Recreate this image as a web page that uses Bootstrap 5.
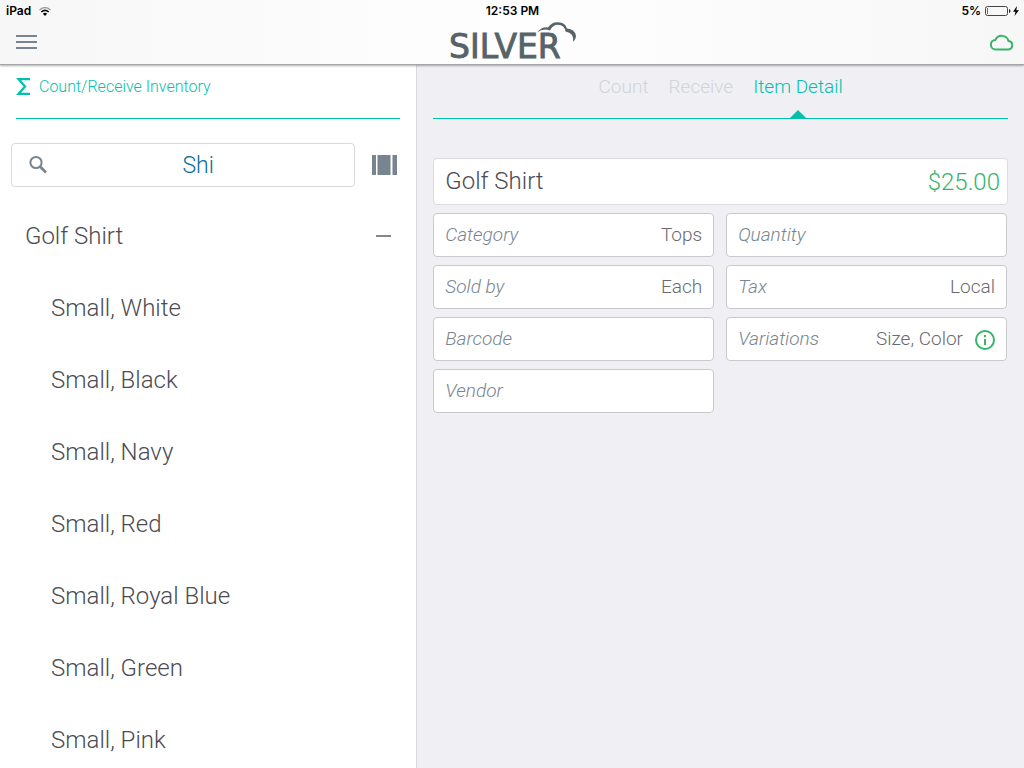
<!DOCTYPE html>
<html lang="en">
<head>
<meta charset="utf-8">
<meta name="viewport" content="width=device-width, initial-scale=1">
<title>Silver – Item Detail</title>
<link href="https://cdn.jsdelivr.net/npm/bootstrap@5.3.0/dist/css/bootstrap.min.css" rel="stylesheet">
<style>
  :root { --teal: #03bfad; --slate: #788590; --ink: #4b4b52; --green: #34b568; }
  body { font-family: Roboto, "Liberation Sans", sans-serif; font-weight: 300; color: var(--ink); background: #efeff4; }
  svg { display: block; flex: none; }
  .three-part { display: grid; grid-template-columns: 1fr auto 1fr; }
  .app-header { flex: none; background: linear-gradient(90deg, #f7f7f7, #fefefe 50%, #f7f7f7); border-bottom: 1px solid #a6a6aa; box-shadow: 0 1px 2px #00000050; z-index: 2; }
  .status-bar { height: 22px; font: 600 12px/22px Inter, sans-serif; color: #000; padding: 0 5px 0 6px; }
  .brand-bar { height: 42px; padding: 0 10px 2px; }
  .menu-button { margin-left: 6px; }
  .brand-logo { overflow: visible; }
  .brand-logo text { font: 33px "DejaVu Sans", sans-serif; }
  .side-pane { flex: 0 0 40.75%; border-right: 1px solid #d9d9de; }
  .title-bar { flex: none; height: 54px; margin: 0 16px; border-bottom: 1px solid var(--teal); color: var(--teal); }
  .side-title { font-size: 16px; font-weight: 300; line-height: 44px; }
  .search-field { height: 44px; border: 1px solid #dadadd; border-radius: 4px; padding: 0 16px; }
  .search-field input { font-size: 23px; font-weight: 300; color: #0a6ca0; padding: 2px 0 0 10px; }
  .search-field input:focus { color: #0a6ca0; }
  .search-row { padding: 24px 18px 0 11px; gap: 16px; }
  .item-list { padding: 13px 24px 0 25px; scrollbar-width: none; }
  .item-row { height: 72px; font-size: 24px; font-weight: 300; color: var(--ink); }
  .item-variant { padding-left: 26px; }
  .detail-tabs { gap: 20px; }
  .detail-tabs a { font-size: 19px; line-height: 44px; height: 53px; color: #d0d5d9; text-decoration: none; }
  .detail-tabs a.active { color: var(--teal); position: relative; }
  .detail-tabs a.active::after { content: ""; position: absolute; bottom: 0; left: 50%; margin-left: -8px; border: 8px solid transparent; border-top: 0; border-bottom-color: var(--teal); }
  .detail-pane { min-width: 0; }
  .detail-body { padding: 39px 16px 16px; }
  .field-box { min-width: 0; background: #fff; border: 1px solid #c9c9cd; border-radius: 4px; height: 44px; padding: 1px 11px 0; font-size: 19px; }
  .field-box label { font-style: italic; color: var(--slate); }
  .field-box input { width: 0; flex: 1; border: 0; outline: 0; padding: 0; background: none; text-align: right; color: #69696e; font-weight: 300; }
  .item-head { background: #fff; border: 1px solid #dcdce0; border-radius: 4px; height: 47px; padding: 0 7px 0 11px; font-size: 24px; margin-bottom: 8px; }
  .item-head h1 { font-size: 24px; font-weight: 300; }
  .price { color: var(--green); }
  .field-grid { display: grid; grid-template-columns: 1fr 1fr; gap: 8px 12px; margin-right: 1px; }
</style>
</head>
<body>
<div class="d-flex flex-column vh-100 overflow-hidden">
  <header class="app-header position-relative">
    <div class="status-bar three-part">
      <div class="d-flex align-items-center gap-2"><span>iPad</span>
        <svg width="12" height="9" viewBox="0 0 12 9" fill="none"><path d="M.5 3Q6-1.800 11.500 3" stroke="#999" stroke-width="1.300"/><path d="M2.300 5Q6 1.900 9.700 5" stroke="#000" stroke-width="1.600"/><path d="M6 9 3.900 6.700Q6 5 8.100 6.700Z" fill="#000"/></svg>
      </div>
      <span>12:53 PM</span>
      <div class="d-flex align-items-center justify-content-end gap-1"><span>5%</span>
        <svg width="34" height="10" viewBox="0 0 34 10"><rect x=".5" y=".5" width="22" height="9" rx="2" fill="none" stroke="#444"/><path d="M2 2h1v6H2z" fill="#e33"/><path d="M24 3q1.500.3 1.500 2T24 7z" fill="#222"/><path d="M32 0 28 5.700h2.500L29.500 10 34 4.200h-2.700z"/></svg>
      </div>
    </div>
    <div class="brand-bar three-part">
      <button class="menu-button btn p-0 border-0 me-auto align-self-center" aria-label="Menu">
        <svg width="21" height="15" viewBox="0 0 21 15" fill="#788590"><path d="M0 0h21v2H0zM0 6h21v2H0zM0 12h21v2H0z"/></svg>
      </button>
      <svg class="brand-logo" width="130" height="40" viewBox="0 0 130 40" fill="#566369" role="img" aria-label="Silver">
        <text x="2" y="36" stroke="#566369" stroke-width=".9">SILVER</text>
        <path d="M90 10.500Q95 4.500 101 5.500Q105-.2 111 .2Q118 .2 120 6.500Q128 7 129 14Q129 17.500 126 20Q127.500 11 118.500 9.500Q117.500 3 111 2.800Q105.500 2.800 103 8.500Q96 6 90 10.500Z"/>
      </svg>
      <svg class="ms-auto align-self-center" width="24" height="17" viewBox="0 0 24 17" fill="none" stroke="#34b568" stroke-width="2"><path d="M6 15.500a4.800 4.800 0 0 1-.6-9.600A7 7 0 0 1 18.500 7a4.300 4.300 0 0 1 .2 8.500z"/></svg>
    </div>
  </header>

  <div class="d-flex flex-grow-1 overflow-hidden">
    <aside class="side-pane bg-white d-flex flex-column">
      <div class="title-bar d-flex align-items-start">
        <svg class="me-2" width="15" height="44" viewBox="0 0 15 44" fill="none" stroke="#03bfad" stroke-width="2.200"><path d="M14 14.100H2.500L9 21.500 2.500 28.900H14"/></svg>
        <h2 class="side-title m-0">Count/Receive Inventory</h2>
      </div>
      <div class="search-row d-flex align-items-center">
        <div class="search-field d-flex align-items-center flex-grow-1">
          <label for="search" aria-label="Search"><svg width="20" height="20" viewBox="0 0 20 20" fill="none" stroke="#788590"><circle cx="8" cy="7.500" r="5.600" stroke-width="2"/><path d="m12 11.500 6 6" stroke-width="2.600"/></svg></label>
          <input id="search" type="text" class="form-control border-0 shadow-none bg-transparent text-center" value="Shi">
        </div>
        <button class="btn p-0 border-0" aria-label="Scan barcode">
          <svg width="27" height="20" viewBox="0 0 27 20" fill="#788590"><path d="M1 0h4v20H1zM6.500 0h13v20h-13zM21.500 0h4.500v20h-4.500z"/></svg>
        </button>
      </div>
      <div class="item-list flex-grow-1 overflow-auto">
        <button class="item-row btn border-0 rounded-0 p-0 w-100 d-flex align-items-center justify-content-between">Golf Shirt
          <svg width="16" height="2" viewBox="0 0 16 2"><path d="M0 0h15v2H0z" fill="#84868a"/></svg>
        </button>
        <div>
          <a href="#" class="item-row item-variant d-flex align-items-center text-decoration-none">Small, White</a>
          <a href="#" class="item-row item-variant d-flex align-items-center text-decoration-none">Small, Black</a>
          <a href="#" class="item-row item-variant d-flex align-items-center text-decoration-none">Small, Navy</a>
          <a href="#" class="item-row item-variant d-flex align-items-center text-decoration-none">Small, Red</a>
          <a href="#" class="item-row item-variant d-flex align-items-center text-decoration-none">Small, Royal Blue</a>
          <a href="#" class="item-row item-variant d-flex align-items-center text-decoration-none">Small, Green</a>
          <a href="#" class="item-row item-variant d-flex align-items-center text-decoration-none">Small, Pink</a>
        </div>
      </div>
    </aside>

    <main class="detail-pane flex-grow-1">
      <nav class="title-bar detail-tabs d-flex justify-content-center">
        <a href="#">Count</a><a href="#">Receive</a><a href="#" class="active" aria-current="page">Item Detail</a>
      </nav>
      <div class="detail-body">
        <div class="item-head d-flex align-items-center justify-content-between"><h1 class="m-0">Golf Shirt</h1><span class="price">$25.00</span></div>
        <form class="field-grid">
          <div class="field-box d-flex align-items-center"><label for="category">Category</label><input id="category" value="Tops"></div>
          <div class="field-box d-flex align-items-center"><label for="quantity">Quantity</label><input id="quantity"></div>
          <div class="field-box d-flex align-items-center"><label for="soldby">Sold by</label><input id="soldby" value="Each"></div>
          <div class="field-box d-flex align-items-center"><label for="tax">Tax</label><input id="tax" value="Local"></div>
          <div class="field-box d-flex align-items-center"><label for="barcode">Barcode</label><input id="barcode"></div>
          <div class="field-box d-flex align-items-center"><label for="variations">Variations</label><input id="variations" value="Size, Color">
            <button type="button" class="btn p-0 border-0 ms-2 ps-1" aria-label="Variation info"><svg width="20" height="20" viewBox="0 0 20 20" fill="none" stroke="#34b568" stroke-width="2"><circle cx="10" cy="10" r="9"/><path d="M10 9v6M10 5v2.200"/></svg></button></div>
          <div class="field-box d-flex align-items-center"><label for="vendor">Vendor</label><input id="vendor"></div>
        </form>
      </div>
    </main>
  </div>
</div>
<script src="https://cdn.jsdelivr.net/npm/bootstrap@5.3.0/dist/js/bootstrap.bundle.min.js"></script>
</body>
</html>
